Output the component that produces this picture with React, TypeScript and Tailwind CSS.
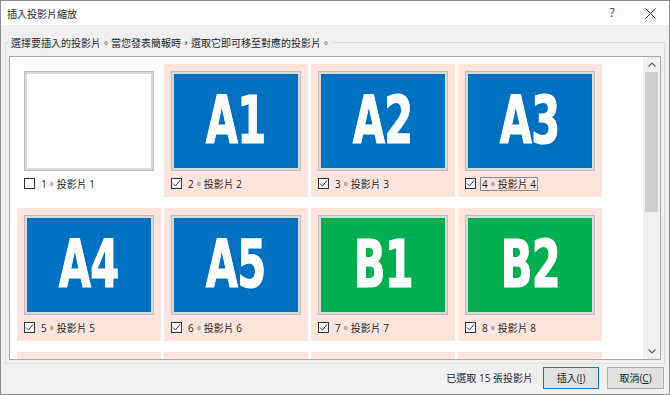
import React from 'react';

type Slide = {
  n: number;
  text: string;
  color: string;
  selected: boolean;
  focused?: boolean;
  partial?: boolean;
};

const slides: Slide[] = [
  { n: 1, text: '', color: '', selected: false },
  { n: 2, text: 'A1', color: 'bg-[#0070c0]', selected: true },
  { n: 3, text: 'A2', color: 'bg-[#0070c0]', selected: true },
  { n: 4, text: 'A3', color: 'bg-[#0070c0]', selected: true, focused: true },
  { n: 5, text: 'A4', color: 'bg-[#0070c0]', selected: true },
  { n: 6, text: 'A5', color: 'bg-[#0070c0]', selected: true },
  { n: 7, text: 'B1', color: 'bg-[#00b050]', selected: true },
  { n: 8, text: 'B2', color: 'bg-[#00b050]', selected: true },
  { n: 9, text: '', color: 'bg-[#0070c0]', selected: true, partial: true },
  { n: 10, text: '', color: 'bg-[#0070c0]', selected: true, partial: true },
  { n: 11, text: '', color: 'bg-[#00b050]', selected: true, partial: true },
  { n: 12, text: '', color: 'bg-[#00b050]', selected: true, partial: true },
];

const Checkbox = ({ checked }: { checked: boolean }) => (
  <div className="w-[11px] h-[11px] border border-[#333] bg-white flex items-center justify-center shrink-0">
    {checked && (
      <svg width="9" height="9" viewBox="0 0 9 9">
        <path d="M1 4.5 L3.5 7 L8 1.5" fill="none" stroke="#333" strokeWidth="1" />
      </svg>
    )}
  </div>
);

const SlideCell = ({ slide }: { slide: Slide }) => (
  <div className={`w-[144px] h-[133px] pt-[7px] pl-[7px] ${slide.selected ? 'bg-[#fde4dd]' : ''}`}>
    <div className="w-[130px] h-[100px] border border-[#bdbdbd] p-[2px] bg-[#dadada]">
      <div className={`w-full h-full flex items-center justify-center ${slide.color || 'bg-white'}`}>
        {slide.text && (
          <span className="text-white font-bold text-[66px] leading-none tracking-[-1px] scale-x-[0.7] [-webkit-text-stroke:1.2px_white] font-['Liberation_Sans_Narrow','DejaVu_Sans_Condensed','Liberation_Sans',sans-serif]">
            {slide.text}
          </span>
        )}
      </div>
    </div>
    {!slide.partial && (
      <div className="mt-[6px] h-[13px] flex items-center gap-[4px]">
        <Checkbox checked={slide.selected} />
        <span
          className={`border px-[1px] leading-[12px] ${slide.focused ? 'border-[#8a8a8a]' : 'border-transparent'}`}
        >
          {slide.n}。投影片 {slide.n}
        </span>
      </div>
    )}
  </div>
);

export default function App() {
  return (
    <div className="w-[670px] h-[395px] border border-[#8c8c8c] bg-[#f0f0f0] flex flex-col text-[10px] text-[#1e1e1e] font-['Open_Sans','Noto_Sans_CJK_TC',sans-serif]">
      {/* Title bar */}
      <div className="h-[24px] bg-white flex items-center pl-[6px] pr-[9px] shrink-0">
        <span className="font-['Noto_Sans_CJK_TC',sans-serif]">插入投影片縮放</span>
        <span className="ml-auto w-[20px] text-center text-[12px] text-[#333]">?</span>
        <div className="ml-[18px] w-[20px] flex justify-center">
          <svg width="11" height="11" viewBox="0 0 11 11">
            <path d="M0.5 0.5 L10.5 10.5 M10.5 0.5 L0.5 10.5" stroke="#333" strokeWidth="1" />
          </svg>
        </div>
      </div>

      {/* Body */}
      <div className="flex-1 flex flex-col px-[4px]">
        <fieldset className="mt-[11px] border border-[#dcdcdc] px-[3px] pb-[3px]">
          <legend className="px-[2px] leading-[13px] font-['Noto_Sans_CJK_TC',sans-serif]">
            選擇要插入的投影片。當您發表簡報時，選取它即可移至對應的投影片。
          </legend>
          <div className="mt-[7px] h-[304px] border border-[#a9a9a9] bg-white flex overflow-hidden">
            <div className="flex-1 pl-[7px] pt-[7px] grid grid-cols-[repeat(4,144px)] gap-x-[3px] gap-y-[11px] content-start overflow-hidden">
              {slides.map((s) => (
                <SlideCell key={s.n} slide={s} />
              ))}
            </div>
            {/* Scrollbar */}
            <div className="w-[17px] bg-[#f0f0f0] flex flex-col shrink-0">
              <div className="h-[15px] flex items-center justify-center">
                <svg width="8" height="5" viewBox="0 0 8 5">
                  <path d="M0.5 4.5 L4 1 L7.5 4.5" fill="none" stroke="#606060" strokeWidth="1.2" />
                </svg>
              </div>
              <div className="mx-[2px] h-[140px] bg-[#cdcdcd]" />
              <div className="flex-1" />
              <div className="h-[15px] flex items-center justify-center">
                <svg width="8" height="5" viewBox="0 0 8 5">
                  <path d="M0.5 0.5 L4 4 L7.5 0.5" fill="none" stroke="#606060" strokeWidth="1.2" />
                </svg>
              </div>
            </div>
          </div>
        </fieldset>

        {/* Footer */}
        <div className="mt-[3px] flex items-center justify-end pr-[1px]">
          <span className="mr-[10px]">已選取 15 張投影片</span>
          <button className="w-[56px] h-[22px] border border-[#0078d7] bg-[#e1e1e1] text-[10px] flex items-center justify-center">
            插入(<span className="underline">I</span>)
          </button>
          <button className="ml-[8px] w-[57px] h-[22px] border border-[#adadad] bg-[#e1e1e1] text-[10px] flex items-center justify-center">
            取消(<span className="underline">C</span>)
          </button>
        </div>
      </div>
    </div>
  );
}
